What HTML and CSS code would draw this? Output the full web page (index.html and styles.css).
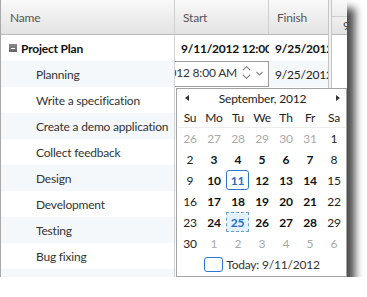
FILE: index.html
```html
<!DOCTYPE html>
<html lang="en">
<head>
<meta charset="UTF-8" />
<title>Project Plan</title>
<link rel="stylesheet" href="styles.css">
</head>
<body>
<div class="frame">
  <div class="tree">
    <div class="head">
      <div class="hc">Name</div>
      <div class="hc">Start</div>
      <div class="hc">Finish</div>
    </div>

    <div class="row">
      <div class="cell name parent"><span class="toggle"></span>Project Plan</div>
      <div class="cell bold">9/11/2012 12:00 AM</div>
      <div class="cell bold">9/25/2012 12:00 AM</div>
    </div>
    <div class="row alt">
      <div class="cell name child">Planning</div>
      <div class="cell editor">
        <div class="edit-text"><span>9/11/2012 8:00 AM</span></div>
        <svg class="spin" width="9" height="16" viewBox="0 0 9 16">
          <path d="M1 6 L4.5 2.5 L8 6" fill="none" stroke="#8a8a8a" stroke-width="1.1"/>
          <path d="M1 11 L4.5 14.5 L8 11" fill="none" stroke="#8a8a8a" stroke-width="1.1"/>
        </svg>
        <svg class="drop" width="7" height="5" viewBox="0 0 7 5">
          <path d="M0.5 1 L3.5 4 L6.5 1" fill="none" stroke="#8a8a8a" stroke-width="1.1"/>
        </svg>
      </div>
      <div class="cell">9/25/2012 12:00 AM</div>
    </div>
    <div class="row"><div class="cell name child">Write a specification</div><div class="cell"></div><div class="cell"></div></div>
    <div class="row alt"><div class="cell name child">Create a demo application</div><div class="cell"></div><div class="cell"></div></div>
    <div class="row"><div class="cell name child">Collect feedback</div><div class="cell"></div><div class="cell"></div></div>
    <div class="row alt"><div class="cell name child">Design</div><div class="cell"></div><div class="cell"></div></div>
    <div class="row"><div class="cell name child">Development</div><div class="cell"></div><div class="cell"></div></div>
    <div class="row alt"><div class="cell name child">Testing</div><div class="cell"></div><div class="cell"></div></div>
    <div class="row"><div class="cell name child">Bug fixing</div><div class="cell"></div><div class="cell"></div></div>
    <div class="row alt"><div class="cell name child"></div><div class="cell"></div><div class="cell"></div></div>
  </div>

  <div class="splitter"></div>

  <div class="gantt">
    <div class="g-top"></div>
    <div class="g-bot">9</div>
  </div>

  <div class="cal">
    <div class="cal-nav">
      <span class="arrow prev"></span>
      <span class="cal-title">September, 2012</span>
      <span class="arrow next"></span>
    </div>
    <div class="cal-days">
      <span>Su</span><span>Mo</span><span>Tu</span><span>We</span><span>Th</span><span>Fr</span><span>Sa</span>
    </div>
    <div class="cal-grid">
      <span class="d other">26</span><span class="d other">27</span><span class="d other">28</span><span class="d other">29</span><span class="d other">30</span><span class="d other">31</span><span class="d">1</span>
      <span class="d">2</span><span class="d wd">3</span><span class="d wd">4</span><span class="d wd">5</span><span class="d wd">6</span><span class="d wd">7</span><span class="d">8</span>
      <span class="d">9</span><span class="d wd">10</span><span class="d wd today">11</span><span class="d wd">12</span><span class="d wd">13</span><span class="d wd">14</span><span class="d">15</span>
      <span class="d">16</span><span class="d wd">17</span><span class="d wd">18</span><span class="d wd">19</span><span class="d wd">20</span><span class="d wd">21</span><span class="d">22</span>
      <span class="d">23</span><span class="d wd">24</span><span class="d wd selected">25</span><span class="d wd">26</span><span class="d wd">27</span><span class="d wd">28</span><span class="d">29</span>
      <span class="d">30</span><span class="d other">1</span><span class="d other">2</span><span class="d other">3</span><span class="d other">4</span><span class="d other">5</span><span class="d other">6</span>
    </div>
    <div class="cal-foot"><span class="today-box"></span>Today: 9/11/2012</div>
  </div>
</div>
</body>
</html>
```

FILE: styles.css
```css
body { margin: 0; background: #fff; font-family: Lato, "Open Sans", sans-serif; font-size: 12px; letter-spacing: -0.2px; color: #222; }

.frame { position: relative; display: flex; width: 347px; height: 277px; box-sizing: border-box; border-left: 1px solid #a9a9a9; background: #fff; overflow: hidden; box-shadow: 8px 8px 8px rgba(0, 0, 0, 0.7); }

/* tree list */
.tree { width: 327px; flex: none; }
.head { display: grid; grid-template-columns: 174px 94px 59px; height: 35px; box-sizing: border-box; background: linear-gradient(#f9f9f9, #e3e3e3); border-bottom: 1px solid #bababa; }
.hc { display: flex; align-items: center; padding-left: 8px; color: #555; border-right: 1px solid #cfcfcf; }
.hc:first-child { padding-left: 9px; }
.hc:last-child { border-right: none; }

.row { display: grid; grid-template-columns: 174px 94px 59px; height: 26px; }
.row.alt { background: #f5f8fb; }
.cell { display: flex; align-items: center; padding-left: 6px; white-space: nowrap; overflow: hidden; }
.cell.name { box-sizing: border-box; border-right: 1px solid #d4d4d4; }
.cell.bold { font-weight: bold; color: #111; }
.parent { padding-left: 8px; font-weight: bold; color: #111; }
.child { padding-left: 35px; color: #333; }

.toggle { position: relative; width: 8px; height: 8px; margin-right: 4px; background: linear-gradient(#8a8a8a, #666); flex: none; }
.toggle::after { content: ""; position: absolute; left: 2px; top: 3.5px; width: 4px; height: 1px; background: #fff; }

.editor { box-sizing: border-box; padding: 0 0 4px 0; border: 1px solid #9c9c9c; border-left: none; background: #fff; }
.edit-text { display: flex; justify-content: flex-end; width: 62px; overflow: hidden; color: #333; }
.spin { margin-left: 5px; flex: none; }
.drop { margin-left: 5px; margin-top: 3px; flex: none; }

/* splitter and gantt */
.splitter { width: 2px; flex: none; border-left: 1px solid #c4c4c4; border-right: 1px solid #c4c4c4; background: #f2f2f2; }
.gantt { flex: 1; }
.g-top { height: 17px; box-sizing: border-box; background: linear-gradient(#f9f9f9, #ececec); border-bottom: 1px solid #cfcfcf; }
.g-bot { height: 18px; box-sizing: border-box; padding-left: 11px; line-height: 17px; background: linear-gradient(#f0f0f0, #e3e3e3); border-bottom: 1px solid #bababa; color: #444; }

/* calendar popup */
.cal { position: absolute; left: 175px; top: 88px; width: 171px; height: 189px; box-sizing: border-box; border: 1px solid #a3a3a3; padding-left: 1px; background: #fff; color: #222; }
.cal-nav { display: flex; align-items: center; justify-content: space-between; height: 18px; padding: 0 6px 0 7px; }
.cal-title { color: #222; }
.arrow { width: 0; height: 0; border-top: 3.5px solid transparent; border-bottom: 3.5px solid transparent; }
.arrow.prev { border-right: 4px solid #333; }
.arrow.next { border-left: 4px solid #333; }

.cal-days { display: grid; grid-template-columns: repeat(7, 24px); height: 20px; border-bottom: 1px solid #ececec; margin-right: 1px; }
.cal-days span { display: flex; align-items: center; justify-content: center; }

.cal-grid { display: grid; grid-template-columns: repeat(7, 24px); grid-auto-rows: 21px; }
.d { display: flex; align-items: center; justify-content: center; box-sizing: border-box; color: #222; }
.d.wd { font-weight: bold; color: #111; }
.d.other { color: #a9a9a9; }
.d.today { margin: 0 1px 1px 0; border: 1px solid #2a78d1; border-radius: 3px; color: #1f6fc6; }
.d.selected { margin: 0 1px 1px 0; border: 1px dashed #6f9dc8; background: #e3f1fb; color: #1f6fc6; }

.cal-foot { display: flex; align-items: center; justify-content: center; gap: 3px; height: 21px; color: #333; }
.today-box { width: 19px; height: 15px; box-sizing: border-box; border: 1px solid #2a78d1; border-radius: 3px; }
```
